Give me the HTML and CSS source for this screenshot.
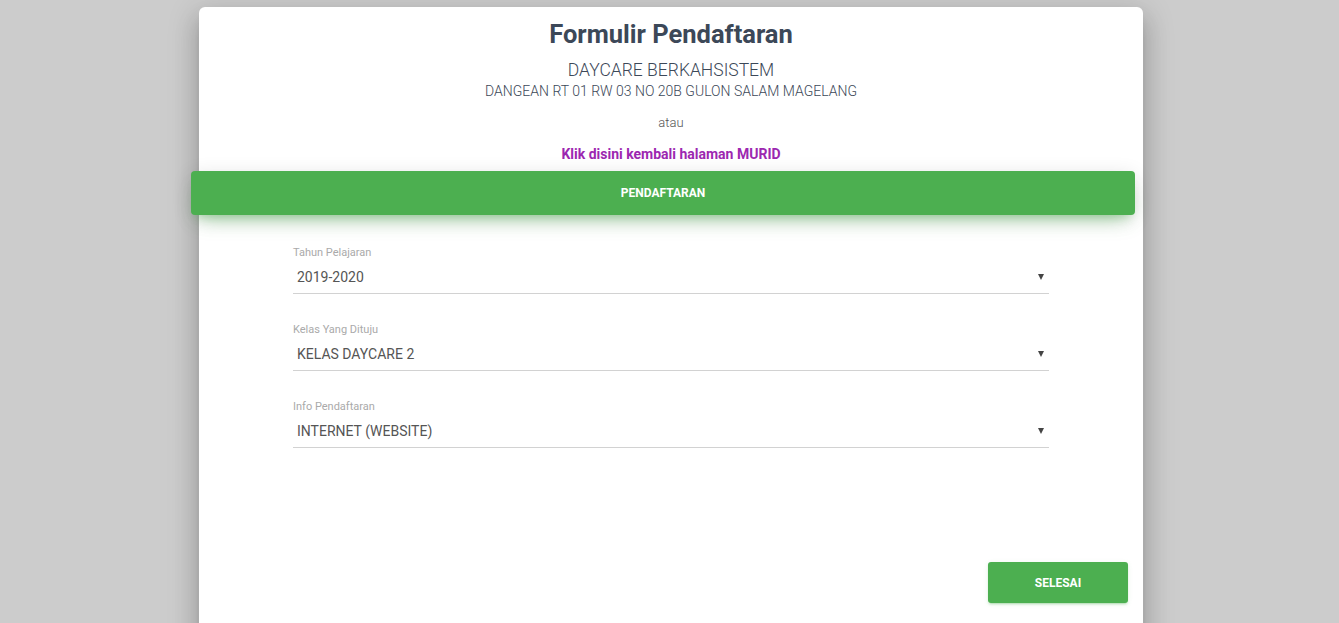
FILE: index.html
```html
<!DOCTYPE html>
<html lang="id">

<head>
    <meta charset="UTF-8">
    <meta name="viewport" content="width=device-width, initial-scale=1.0">
    <title>Formulir Pendaftaran</title>
    <link rel="stylesheet" href="styles.css">
</head>

<body>
    <div class="card">
        <div class="card-top">
            <h2 class="title">Formulir Pendaftaran</h2>
            <p class="school">DAYCARE BERKAHSISTEM</p>
            <p class="address">DANGEAN RT 01 RW 03 NO 20B GULON SALAM MAGELANG</p>
            <p class="or">atau</p>
            <a class="back-link" href="#">Klik disini kembali halaman MURID</a>
        </div>

        <div class="card-header">PENDAFTARAN</div>

        <form class="form">
            <div class="field">
                <label class="field-label">Tahun Pelajaran</label>
                <div class="select">
                    <span>2019-2020</span>
                    <span class="caret"></span>
                </div>
            </div>
            <div class="field">
                <label class="field-label">Kelas Yang Dituju</label>
                <div class="select">
                    <span>KELAS DAYCARE 2</span>
                    <span class="caret"></span>
                </div>
            </div>
            <div class="field">
                <label class="field-label">Info Pendaftaran</label>
                <div class="select">
                    <span>INTERNET (WEBSITE)</span>
                    <span class="caret"></span>
                </div>
            </div>
        </form>

        <div class="card-footer">
            <button class="btn-finish" type="button">SELESAI</button>
        </div>
    </div>
</body>

</html>
```

FILE: styles.css
```css
body {
    font-family: Roboto, "Liberation Sans", Arial, sans-serif;
    margin: 0;
    padding: 0 0 0 3px;
    background-color: #cccccc;
    overflow: hidden;
}

.card {
    width: 944px;
    height: 640px;
    margin: 7px auto 0;
    background-color: #fff;
    border-radius: 6px;
    box-shadow: 0 16px 24px 2px rgba(0, 0, 0, 0.14), 0 6px 30px 5px rgba(0, 0, 0, 0.12), 0 8px 10px -5px rgba(0, 0, 0, 0.2);
}

.card-top {
    padding-top: 11px;
    text-align: center;
    color: #3c4858;
}

.title {
    margin: 0;
    font-size: 25.5px;
    line-height: 32px;
    font-weight: 700;
}

.school {
    margin: 9px 0 0;
    font-size: 17.5px;
    line-height: 22px;
    font-weight: 300;
}

.address {
    margin: 2px 0 0;
    font-size: 14px;
    line-height: 16px;
    font-weight: 300;
}

.or {
    margin: 16px 0 0;
    font-size: 13px;
    line-height: 16px;
    font-weight: 300;
    color: #555;
}

.back-link {
    display: inline-block;
    margin-top: 14px;
    font-size: 14px;
    line-height: 18px;
    font-weight: 700;
    color: #9c27b0;
    text-decoration: none;
}

.card-header {
    width: 944px;
    margin: 8px 0 0 -8px;
    height: 44px;
    line-height: 44px;
    background-color: #4caf50;
    border-radius: 4px;
    color: #fff;
    font-size: 12px;
    font-weight: 700;
    text-align: center;
    box-shadow: 0 12px 20px -10px rgba(76, 175, 80, 0.5), 0 4px 20px 0 rgba(0, 0, 0, 0.12), 0 7px 8px -5px rgba(76, 175, 80, 0.25);
}

.form {
    width: 756px;
    margin: 31px auto 0;
    display: flex;
    flex-direction: column;
    gap: 29px;
}

.field-label {
    display: block;
    font-size: 11px;
    line-height: 14px;
    color: #aaaaaa;
}

.select {
    display: flex;
    justify-content: space-between;
    align-items: center;
    padding: 7px 5px 6px 4px;
    font-size: 14px;
    line-height: 20px;
    color: #555;
    border-bottom: 1px solid #d2d2d2;
}

.caret {
    width: 0;
    height: 0;
    border-left: 3.5px solid transparent;
    border-right: 3.5px solid transparent;
    border-top: 6px solid #444;
}

.card-footer {
    display: flex;
    justify-content: flex-end;
    padding: 114px 15px 0;
}

.btn-finish {
    width: 140px;
    height: 41px;
    border: none;
    border-radius: 3px;
    background-color: #4caf50;
    color: #fff;
    font-family: Roboto, "Liberation Sans", Arial, sans-serif;
    font-size: 12px;
    font-weight: 700;
    box-shadow: 0 2px 2px 0 rgba(76, 175, 80, 0.14), 0 3px 1px -2px rgba(76, 175, 80, 0.2), 0 1px 5px 0 rgba(76, 175, 80, 0.12);
    cursor: pointer;
}
```
